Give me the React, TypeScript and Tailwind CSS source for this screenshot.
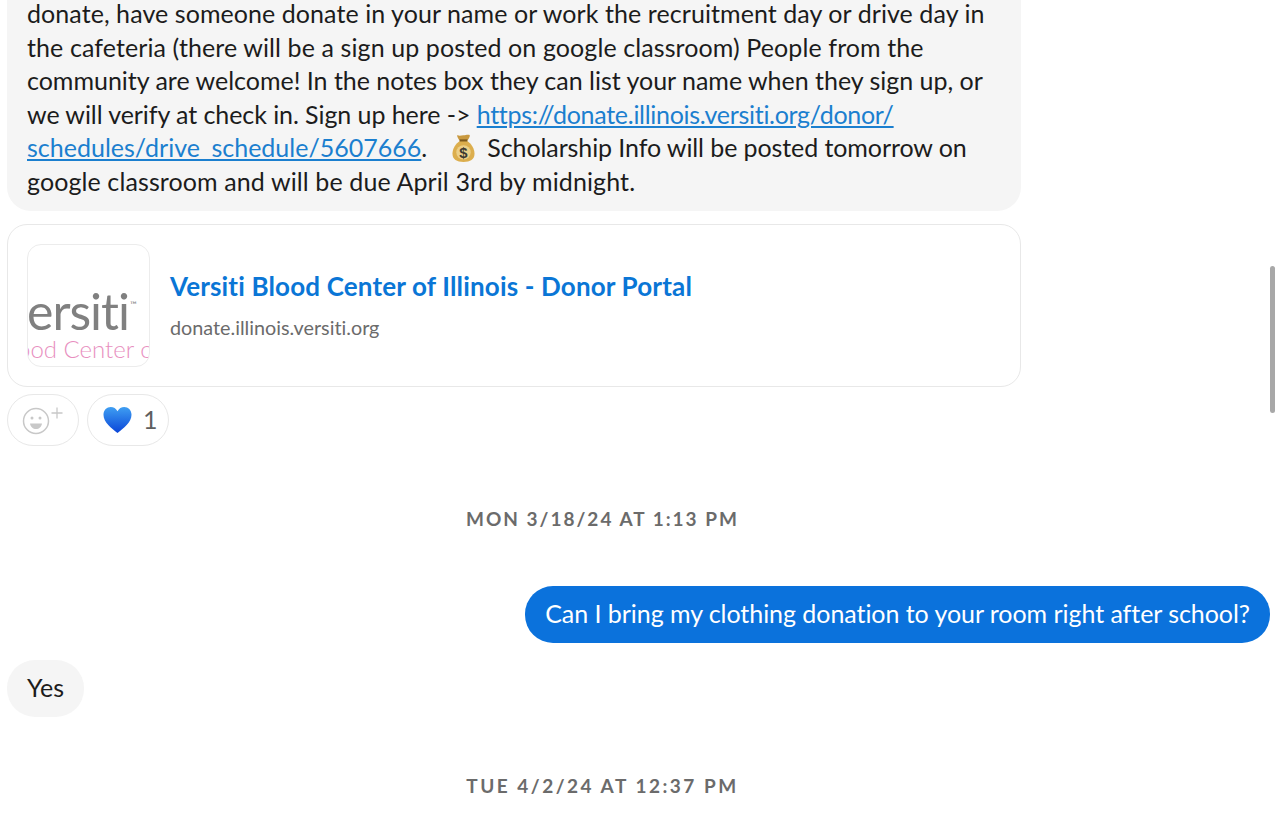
function MoneyBag() {
  return (
    <svg viewBox="0 0 24 30" className="mr-[12px] ml-[25px] inline-block h-[30px] w-[23px] align-[-6px]">
      <path d="M5.500 1.500c2.500 1.500 4 .3 6.500 .3s4-1.200 6.500-.3c.6 2-1.500 4.500-3 6.500h-7c-1.500-2-3.600-4.500-3-6.500z" fill="#c9993f" />
      <path d="M8.500 7.500h7c4.800 3 8 8.500 8 13.500 0 6-4.500 8.500-11.500 8.500S.5 27 .5 21c0-5 3.200-10.500 8-13.500z" fill="#dcae4d" />
      <path d="M8 6h8v2.200H8z" fill="#7d5a1e" />
      <circle cx="12" cy="19.500" r="7.500" fill="#ecd088" />
      <text x="12" y="25" textAnchor="middle" fontSize="15.500" fontWeight="700" fill="#3d3a30" fontFamily="Liberation Sans, sans-serif">$</text>
    </svg>
  )
}

function Heart() {
  return (
    <svg viewBox="0 0 30 28" className="h-[28px] w-[29px] shrink-0">
      <defs>
        <linearGradient id="heart" x1="0" y1="0" x2="0" y2="1">
          <stop offset="0" stopColor="#3f9ff2" />
          <stop offset="1" stopColor="#0a45d8" />
        </linearGradient>
      </defs>
      <path d="M15 27.500C9 22.500.5 16.500.5 8.500.5 3.500 4 .5 8 .5c3 0 5.500 1.500 7 4.500 1.500-3 4-4.500 7-4.500 4 0 7.500 3 7.500 8 0 8-8.500 14-14.500 19z" fill="url(#heart)" />
    </svg>
  )
}

function AddReaction() {
  return (
    <svg viewBox="0 0 42 30" className="h-[30px] w-[42px]" fill="none" stroke="#c8c8c8">
      <circle cx="14" cy="16" r="12.500" strokeWidth="1.500" />
      <circle cx="10" cy="13" r="1.500" fill="#c8c8c8" stroke="none" />
      <circle cx="18" cy="13" r="1.500" fill="#c8c8c8" stroke="none" />
      <path d="M8 18.500h12c-.5 3.500-3 5.500-6 5.500s-5.500-2-6-5.500z" fill="#c8c8c8" stroke="none" />
      <path d="M29.500 8h11M35 2.500v11" strokeWidth="1.300" />
    </svg>
  )
}

function Timestamp({ children, wide }: { children: string; wide?: boolean }) {
  return (
    <div
      className={
        wide
          ? 'flex justify-center pr-[75px] text-[19px] leading-[24px] font-bold tracking-[2.5px] text-[#6b6b6b]'
          : 'flex justify-center pr-[75px] text-[19px] leading-[24px] font-bold tracking-[2px] text-[#6b6b6b]'
      }
    >
      {children}
    </div>
  )
}

export default function App() {
  return (
    <div className="relative h-[827px] w-[1280px] overflow-hidden bg-white font-['Lato',sans-serif] text-[25px] leading-[33.6px] tracking-[0.07px] text-[#1c1c1c] [font-variant-ligatures:none]">
      <div className="ml-[7px] w-[1014px]">
        <div className="h-[211px] overflow-hidden rounded-b-[24px] bg-[#f5f5f5] px-[20px]">
          <p className="-mt-[3px] whitespace-nowrap">
            donate, have someone donate in your name or work the recruitment day or drive day in
            <br />
            <span className="tracking-[0.1px]">
              the cafeteria (there will be a sign up posted on google classroom) People from the
            </span>
            <br />
            <span className="tracking-[-0.01px]">
              community are welcome! In the notes box they can list your name when they sign up, or
            </span>
            <br />
            <span className="tracking-[-0.07px]">we will verify at check in. Sign up here -&gt; </span>
            <a className="tracking-[-0.29px] text-[#1b7fcf] underline">https://donate.illinois.versiti.org/donor/</a>
            <br />
            <a className="tracking-[0.01px] text-[#1b7fcf] underline">schedules/drive_schedule/5607666</a>.
            <MoneyBag />
            <span className="tracking-[-0.09px]">Scholarship Info will be posted tomorrow on</span>
            <br />
            <span className="tracking-[0.11px]">google classroom and will be due April 3rd by midnight.</span>
          </p>
        </div>

        <div className="mt-[13px] flex h-[163px] items-center gap-[20px] rounded-[20px] border-[1.5px] border-[#e8e8e8] pl-[19px]">
          <div className="relative h-[123px] w-[123px] shrink-0 overflow-hidden rounded-[14px] border-[1.5px] border-[#ececec]">
            <div className="absolute top-[36px] -left-[1px] text-[50px] leading-[60px] font-normal tracking-[-1px] whitespace-nowrap text-[#808080]">
              ersiti
              <span className="absolute top-[-6px] left-[103px] text-[9px] tracking-normal">™</span>
            </div>
            <div className="absolute top-[89px] -left-[11px] text-[24px] leading-[30px] font-light tracking-normal whitespace-nowrap text-[#e88fc0]">
              ood Center of
            </div>
          </div>
          <div className="pb-[2px]">
            <div className="text-[26px] leading-[32px] font-bold tracking-[0.16px] text-[#0a76d6]">
              Versiti Blood Center of Illinois - Donor Portal
            </div>
            <div className="mt-[13px] text-[19.8px] leading-[24px] tracking-normal text-[#6b6b6b]">
              donate.illinois.versiti.org
            </div>
          </div>
        </div>

        <div className="mt-[7px] flex gap-[8px]">
          <div className="flex h-[52px] w-[72px] items-center justify-center rounded-full border-[1.5px] border-[#e8e8e8]">
            <AddReaction />
          </div>
          <div className="flex h-[52px] w-[82px] items-center gap-[11px] rounded-full border-[1.5px] border-[#e8e8e8] pl-[15px] text-[#5f5f5f]">
            <Heart />
            <span>1</span>
          </div>
        </div>
      </div>

      <div className="mt-[61px]">
        <Timestamp>MON 3/18/24 AT 1:13 PM</Timestamp>
      </div>

      <div className="mt-[55px] flex justify-end pr-[10px]">
        <div className="flex h-[57px] items-center rounded-[28px] bg-[#0b72dc] px-[20px] tracking-[-0.05px] whitespace-nowrap text-white">
          <span className="-mt-[1px]">Can I bring my clothing donation to your room right after school?</span>
        </div>
      </div>

      <div className="mt-[17px] ml-[7px] flex">
        <div className="flex h-[57px] items-center rounded-[28px] bg-[#f5f5f5] px-[20px]">
          <span className="-mt-[1px]">Yes</span>
        </div>
      </div>

      <div className="mt-[57px]">
        <Timestamp wide>TUE 4/2/24 AT 12:37 PM</Timestamp>
      </div>

      <div className="absolute top-[266px] left-[1270px] h-[147px] w-[5px] rounded-full bg-[#a8a8a8]" />
    </div>
  )
}
